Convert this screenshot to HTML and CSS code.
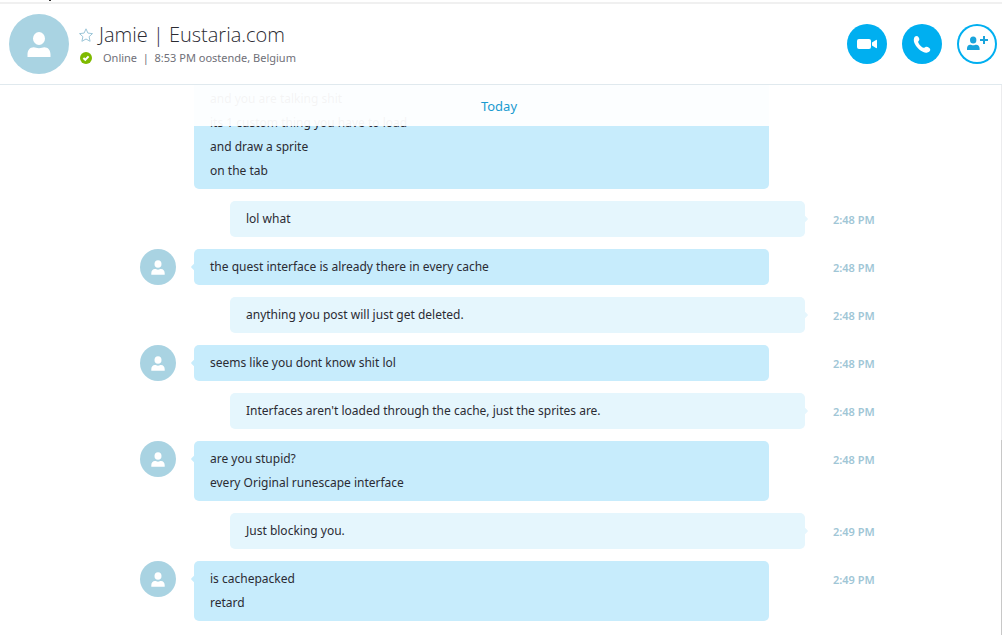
FILE: index.html
```html
<!DOCTYPE html>
<html lang="en">
<head>
<meta charset="utf-8">
<meta name="viewport" content="width=device-width, initial-scale=1">
<title>Jamie | Eustaria.com</title>
<link rel="stylesheet" href="styles.css">
</head>
<body>
<svg class="defs" aria-hidden="true">
  <symbol id="person" viewBox="0 0 24 25">
    <ellipse cx="12" cy="6.500" rx="6" ry="6.500"/>
    <path d="M.5 25v-2.500c0-4.500 2.500-7.300 6.300-7.300 1.700 0 2.700 1 5.200 1s3.500-1 5.200-1c3.800 0 6.300 2.800 6.300 7.300V25z"/>
  </symbol>
</svg>
<div class="topline"><span class="topline-mark"></span></div>
<header class="header">
  <div class="avatar avatar-large"><svg><use href="#person"/></svg></div>
  <div class="contact">
    <div class="contact-row">
      <button class="star" aria-label="Add to favorites"><svg viewBox="0 0 14 14"><path d="M7 .8l1.900 4.300 4.600.5-3.400 3.100 1 4.600L7 11l-4.100 2.300 1-4.600L.5 5.600l4.600-.5z"/></svg></button>
      <h1 class="name">Jamie | Eustaria.com</h1>
    </div>
    <div class="contact-row">
      <svg class="presence" viewBox="0 0 12 12"><circle cx="6" cy="6" r="6"/><path d="M3.400 6l1.900 1.800 3.300-3.400"/></svg>
      <p class="status">Online&nbsp; |&nbsp; 8:53 PM oostende, Belgium</p>
    </div>
  </div>
  <div class="actions">
    <button class="action" aria-label="Video call"><svg viewBox="0 0 40 40"><rect x="10" y="15" width="14" height="10" rx="2"/><path d="M25 18.500l4-2.500q1-.5 1 .6v6.800q0 1.100-1 .6l-4-2.500z"/></svg></button>
    <button class="action" aria-label="Call"><svg viewBox="0 0 40 40"><path d="M13 12.600c1.300-1.100 2.600-.8 3.400.3.900 1.200 1.200 2.500.7 3.400-.4.800-1.100 1-.9 1.900.5 2 3.300 4.900 5.300 5.500.9.300 1.200-.5 2-.8 1-.4 2.600 0 3.800 1 1.200 1 1.300 2.300.3 3.300-1.600 1.600-4 1.900-6.300.9-3.700-1.600-7.400-5.400-8.900-9-.9-2.300-.9-5.100.6-6.500z"/></svg></button>
    <button class="action action-outline" aria-label="Add people"><svg viewBox="0 0 40 40"><ellipse cx="16.200" cy="16" rx="3.200" ry="3.600"/><path d="M10 26v-1.500c0-2.200 1.300-3.700 3.200-3.700 1 0 1.600.5 3 .5s2-.5 3-.5c1.900 0 3.400 1.500 3.400 3.700V26z"/><path d="M26 12h2v3h3v2h-3v3h-2v-3h-3v-2h3z"/></svg></button>
  </div>
</header>
<main class="chat">
  <div class="day">Today</div>
  <div class="log">
    <div class="row"><div class="bubble in"><p>and you are talking shit</p><p>its 1 custom thing you have to load</p><p>and draw a sprite</p><p>on the tab</p></div></div>
    <div class="row"><div class="bubble out tail"><p>lol what</p></div><time class="time">2:48 PM</time></div>
    <div class="row"><div class="avatar"><svg><use href="#person"/></svg></div><div class="bubble in tail"><p>the quest interface is already there in every cache</p></div><time class="time">2:48 PM</time></div>
    <div class="row"><div class="bubble out tail"><p>anything you post will just get deleted.</p></div><time class="time">2:48 PM</time></div>
    <div class="row"><div class="avatar"><svg><use href="#person"/></svg></div><div class="bubble in tail"><p>seems like you dont know shit lol</p></div><time class="time">2:48 PM</time></div>
    <div class="row"><div class="bubble out tail"><p>Interfaces aren't loaded through the cache, just the sprites are.</p></div><time class="time">2:48 PM</time></div>
    <div class="row"><div class="avatar"><svg><use href="#person"/></svg></div><div class="bubble in tail"><p>are you stupid?</p><p>every Original runescape interface</p></div><time class="time">2:48 PM</time></div>
    <div class="row"><div class="bubble out tail"><p>Just blocking you.</p></div><time class="time">2:49 PM</time></div>
    <div class="row"><div class="avatar"><svg><use href="#person"/></svg></div><div class="bubble in tail"><p>is cachepacked</p><p>retard</p></div><time class="time">2:49 PM</time></div>
  </div>
  <div class="scrollbar"><div class="thumb"></div></div>
</main>
</body>
</html>
```
FILE: styles.css
```css
* { box-sizing: border-box; }
body {
  margin: 0;
  height: 100vh;
  display: flex;
  flex-direction: column;
  overflow: hidden;
  background: #fff;
  color: #2b2b33;
  font: 12px/24px "Noto Sans", "Open Sans", sans-serif;
}
h1, p { margin: 0; }
button { padding: 0; border: 0; background: none; cursor: pointer; }
svg { display: block; }
.defs { position: absolute; width: 0; height: 0; }

.topline { flex: none; height: 4px; padding-left: 49px; border-bottom: 2px solid #f0f0f0; }
.topline-mark { display: block; width: 2px; height: 1px; background: #333; }

.header {
  flex: none;
  height: 81px;
  display: flex;
  align-items: center;
  padding: 0 5px 0 9px;
  border-bottom: 1px solid #e0e9ee;
}
.avatar {
  width: 36px;
  height: 36px;
  border-radius: 50%;
  background: #a9d3e2;
  display: grid;
  place-items: center;
}
.avatar svg { width: 14px; height: 15px; fill: #fff; }
.avatar-large { flex: none; width: 60px; height: 60px; }
.avatar-large svg { width: 24px; height: 25px; }

.contact { flex: 1; min-width: 0; padding-left: 10px; }
.contact-row { display: flex; align-items: center; }
.star { flex: none; width: 14px; height: 14px; margin-right: 6px; }
.star svg { width: 14px; height: 14px; fill: none; stroke: #9cc6d8; stroke-width: 1; }
.name { font: 300 20px/28px "Open Sans", "Noto Sans", sans-serif; white-space: nowrap; }
.presence { flex: none; width: 12px; height: 12px; margin: 0 11px 0 1px; fill: #7fba00; }
.presence path { fill: none; stroke: #fff; stroke-width: 2; }
.status { font-size: 11px; line-height: 18px; color: #6f6f78; white-space: nowrap; }

.actions { flex: none; display: flex; gap: 15px; }
.action { width: 40px; height: 40px; border-radius: 50%; background: #00aff0; }
.action svg { width: 40px; height: 40px; fill: #fff; }
.action-outline { background: #fff; box-shadow: inset 0 0 0 2px #00aff0; }
.action-outline svg { fill: #18a4dc; }

.chat { position: relative; flex: 1; min-height: 0; display: flex; overflow: hidden; }
.day {
  position: absolute;
  z-index: 2;
  top: 0;
  left: 0;
  right: 4px;
  height: 41px;
  line-height: 42px;
  text-align: center;
  font-size: 13px;
  color: #1a9bd0;
  background: rgba(255, 255, 255, .95);
}
.log {
  flex: 1;
  min-width: 0;
  display: flex;
  flex-direction: column;
  justify-content: flex-end;
  gap: 12px;
  padding: 0 126px 14px 140px;
}
.row {
  flex: none;
  display: grid;
  grid-template-columns: 54px minmax(0, 1fr) 70px;
  align-items: start;
}
.bubble { position: relative; grid-column: 2; padding: 6px 16px; border-radius: 5px; }
.bubble p { position: relative; line-height: 24px; }
.in { margin-right: 36px; background: #c7ecfc; }
.out { margin-left: 36px; background: #e5f6fd; }
.tail::before {
  content: "";
  position: absolute;
  top: 15px;
  width: 6px;
  height: 6px;
  border-radius: 1px;
  background: inherit;
  transform: rotate(45deg);
}
.in::before { left: -2px; }
.out::before { right: -2px; }
.time {
  grid-column: 3;
  padding: 7px 0 0 28px;
  font-size: 11px;
  font-weight: 600;
  color: #a0c6d6;
  white-space: nowrap;
}
.scrollbar { flex: none; width: 1px; background: #ececee; display: flex; align-items: flex-end; }
.thumb { width: 1px; height: 35.5%; background: #c8c8c8; }
```
